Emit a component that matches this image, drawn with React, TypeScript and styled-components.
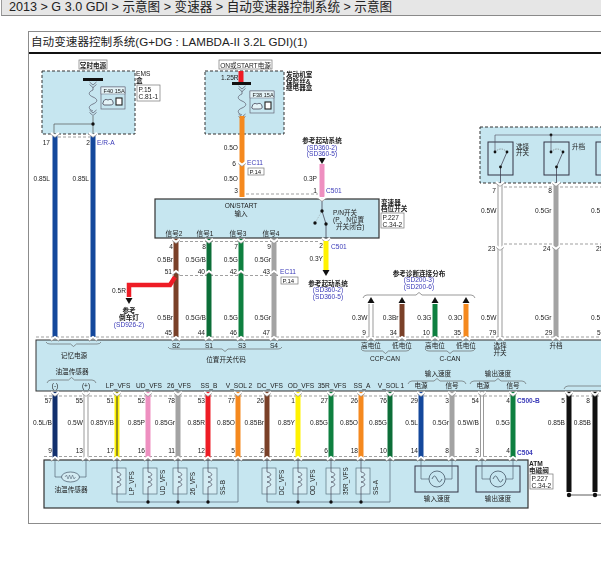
import React from "react";
import styled, { createGlobalStyle } from "styled-components";

const GlobalStyle = createGlobalStyle`
  html, body {
    margin: 0;
    background: #fff;
    font-family: "Liberation Sans", "Noto Sans CJK SC", sans-serif;
  }
`;

const Page = styled.div`
  width: 601px;
  height: 571px;
  overflow: hidden;
`;

const Crumb = styled.div`
  height: 15px;
  margin-left: 1px;
  padding-left: 7px;
  background: #e6e6e6;
  border-left: 1px solid #9a9a9a;
  border-bottom: 1px solid #8a8a8a;
  color: #222;
  font-size: 12.6px;
  line-height: 15px;
  white-space: nowrap;
`;

const Panel = styled.div`
  width: 640px;
  height: 491px;
  margin: 15px 0 0 28px;
  border: 1px solid #8c8c8c;
  border-right: 0;
`;

const PanelTitle = styled.div`
  height: 20px;
  padding-left: 2px;
  border-bottom: 2px solid #111;
  color: #222;
  font-size: 11.6px;
  line-height: 20px;
  white-space: nowrap;
`;

const Diagram = styled.svg`
  display: block;
  width: 572px;
  height: 469px;
  filter: blur(0.3px);
`;

const Label = styled.text<{ $blue?: boolean; $size?: number; $weight?: number }>`
  font-family: "Liberation Sans", "Noto Sans CJK SC", sans-serif;
  font-size: ${(p) => p.$size ?? 6.6}px;
  font-weight: ${(p) => p.$weight ?? 400};
  fill: ${(p) => (p.$blue ? "#3a3ab8" : "#222")};
`;

const SKY = "#c6e6f0";
const DK = "#333";
const BLUE = "#14489c";
const NAVY = "#12306e";
const GREEN = "#0e8040";
const DGREEN = "#0c6e38";
const BROWN = "#7a4028";
const GRAY = "#a3a3a3";
const ORANGE = "#f5891e";
const PINK = "#ee8fc0";
const YELLOW = "#fff200";
const RED = "#ee1c25";

type Txt = [number, number, string];

function Wire({ x, y1, y2, color, w = 5 }: { x: number; y1: number; y2: number; color: string; w?: number }) {
  if (color === "white") {
    return (
      <g>
        <line x1={x} x2={x} y1={y1} y2={y2} stroke="#9a9a9a" strokeWidth={w} />
        <line x1={x} x2={x} y1={y1} y2={y2} stroke="#fff" strokeWidth={w - 2} />
      </g>
    );
  }
  if (color === "stripe") {
    return (
      <g>
        <line x1={x} x2={x} y1={y1} y2={y2} stroke={YELLOW} strokeWidth={w} />
        <line x1={x} x2={x} y1={y1} y2={y2} stroke="#333" strokeWidth={1} />
      </g>
    );
  }
  return <line x1={x} x2={x} y1={y1} y2={y2} stroke={color} strokeWidth={w} />;
}

// little connector chevron; up=true points up
function Chev({ x, y, up = false }: { x: number; y: number; up?: boolean }) {
  const d = up ? -3 : 3;
  return (
    <g fill="none" strokeLinejoin="miter">
      <path d={`M${x - 4} ${y} L${x} ${y + d} L${x + 4} ${y}`} stroke="#fff" strokeWidth={2.2} />
      <path d={`M${x - 4} ${y + 1.4} L${x} ${y + d + 1.4} L${x + 4} ${y + 1.4}`} stroke="#777" strokeWidth={0.6} />
    </g>
  );
}

function DarkChev({ x, y }: { x: number; y: number }) {
  return (
    <path
      d={`M${x - 3.5} ${y} L${x} ${y + 3} L${x + 3.5} ${y} M${x - 3.5} ${y + 2.5} L${x} ${y + 5.5} L${x + 3.5} ${y + 2.5}`}
      fill="none"
      stroke="#556"
      strokeWidth={0.7}
    />
  );
}

function Dash({ x1, x2, y }: { x1: number; x2: number; y: number }) {
  return <line x1={x1} x2={x2} y1={y} y2={y} stroke="#777" strokeWidth={0.7} strokeDasharray="3 2" />;
}

function Arrow({ x, y }: { x: number; y: number }) {
  return <path d={`M${x - 3.5} ${y} H${x + 3.5} L${x} ${y + 6} Z`} fill="#111" />;
}

function UpArrow({ x, y }: { x: number; y: number }) {
  return <path d={`M${x - 3.5} ${y} H${x + 3.5} L${x} ${y - 6} Z`} fill="#111" />;
}

function Node({ x, y, r = 1.7 }: { x: number; y: number; r?: number }) {
  return <circle cx={x} cy={y} r={r} fill="#111" />;
}

function RefBox({ x, y, w, h, lines }: { x: number; y: number; w: number; h: number; lines: string[] }) {
  return (
    <g>
      <rect x={x} y={y} width={w} height={h} fill="#fff" stroke="#777" strokeWidth={0.7} />
      {lines.map((t, i) => (
        <Label key={t} x={x + 1.5} y={y + 6.5 + i * 7.2}>
          {t}
        </Label>
      ))}
    </g>
  );
}

function Fuse({ x, y, name }: { x: number; y: number; name: string }) {
  return (
    <g>
      <DarkChev x={x} y={y} />
      <path
        d={`M${x} ${y + 5} v3 c-5 2 -5 5 0 7 c5 2 5 5 0 7 c-5 2 -5 5 0 7`}
        fill="none"
        stroke="#556"
        strokeWidth={0.7}
      />
      <DarkChev x={x} y={y + 28} />
      <rect x={x + 8} y={y + 5} width={24} height={22} fill={SKY} stroke="#667" strokeWidth={0.7} />
      <rect x={x + 8} y={y + 5} width={24} height={7} fill="#e4f3f7" stroke="#667" strokeWidth={0.5} />
      <Label x={x + 10.5} y={y + 10.8} $size={5.6}>
        {name}
      </Label>
      <path
        d={`M${x + 10} ${y + 21} q1 -5 5 -3 q4 -2 5 2 q1 3 -3 3 h-6 q-2 -1 -1 -2 z`}
        fill="#e4f3f7"
        stroke="#445"
        strokeWidth={0.8}
      />
      <rect x={x + 23} y={y + 16} width={6} height={7} fill="#fff" stroke="#222" strokeWidth={1.1} />
    </g>
  );
}

function Coil({ x, name }: { x: number; name: string }) {
  const cx = x + 5;
  return (
    <g>
      <rect x={x} y={468} width={14} height={26} fill="#d4ecf3" stroke="#5a7480" strokeWidth={0.7} />
      <path
        d={`M${cx} 460 V472 c5 1 5 4 0 5 c5 1 5 4 0 5 c5 1 5 4 0 5 V502`}
        fill="none"
        stroke="#445"
        strokeWidth={0.7}
      />
      <Label transform={`translate(${x + 21.5} 495) rotate(-90)`} $size={6.4}>
        {name}
      </Label>
    </g>
  );
}

function SpeedBox({ x, w, a, b, name, cx }: { x: number; w: number; a: number; b: number; name: string; cx: number }) {
  return (
    <g>
      <rect x={x} y={466} width={w} height={26} fill="none" stroke="#334" strokeWidth={1} />
      <path d={`M${a} 460 V479 H${cx - 8} M${b} 460 V479 H${cx + 8}`} fill="none" stroke="#567" strokeWidth={0.7} />
      <circle cx={cx} cy={479} r={8} fill={SKY} stroke="#456" strokeWidth={0.8} />
      <path d={`M${cx - 5} 479 q2.5 -6 5 0 t5 0`} fill="none" stroke="#456" strokeWidth={0.8} />
      <Label x={cx} y={501} textAnchor="middle">
        {name}
      </Label>
    </g>
  );
}

function Switch({ x, top }: { x: number; top?: boolean }) {
  return (
    <g>
      <rect x={x} y={142} width={25} height={33} fill="none" stroke="#334" strokeWidth={1} />
      <path d={`M${x + 7} 152 Q${x + 13} 146 ${x + 19} 152`} fill="none" stroke="#666" strokeWidth={0.6} strokeDasharray="1.5 1" />
      <path d={`M${x + 19} 152 L${x + 12.5} 167 V183`} fill="none" stroke="#445" strokeWidth={0.8} />
      {top && <path d={`M${x + 7} 135 V152`} fill="none" stroke="#556" strokeWidth={0.7} />}
      <Node x={x + 7} y={152} r={1.4} />
      <Node x={x + 19} y={152} r={1.4} />
      <Node x={x + 12.5} y={167} r={1.4} />
    </g>
  );
}

const lowerWires: [number, string, string, string, string][] = [
  [55, NAVY, "57", "0.5L/B", "9"],
  [86, "white", "55", "0.5W", "13"],
  [117, "stripe", "51", "0.85Y/B", "17"],
  [148, PINK, "52", "0.85P", "16"],
  [178, GRAY, "78", "0.85Gr", "11"],
  [208, RED, "53", "0.85R", "12"],
  [238, ORANGE, "77", "0.85O", "5"],
  [267, BROWN, "26", "0.85Br", "2"],
  [298, YELLOW, "1", "0.85Y", "7"],
  [331, GREEN, "27", "0.85G", "6"],
  [361, ORANGE, "26", "0.85O", "18"],
  [390, DGREEN, "76", "0.85G", "10"],
  [421, BLUE, "29", "0.5L", "14"],
  [452, GRAY, "3", "0.5Gr", "8"],
  [482, "white", "54", "0.5W/B", "3"],
  [513, GREEN, "4", "0.5G", "4"],
];

const midWires: [number, string, string, string, string, string][] = [
  [176, BROWN, "4", "0.5Br", "51", "45"],
  [209, DGREEN, "8", "0.5G/B", "40", "44"],
  [241, GREEN, "7", "0.5G", "42", "46"],
  [274, GRAY, "9", "0.5Gr", "43", "47"],
];

const canWires: [number, string, string, string][] = [
  [371, "white", "0.3W", "9"],
  [402, BROWN, "0.3Br", "34"],
  [435, GREEN, "0.3G", "10"],
  [466, ORANGE, "0.3O", "35"],
];

const moduleTexts: Txt[] = [
  [74, 358, "记忆电源"],
  [72, 374, "油温传感器"],
  [55, 388, "(-)"],
  [86, 388, "(+)"],
  [118, 388, "LP_VFS"],
  [149, 388, "UD_VFS"],
  [179, 388, "26_VFS"],
  [209, 388, "SS_B"],
  [239, 388, "V_SOL 2"],
  [270, 388, "DC_VFS"],
  [301, 388, "OD_VFS"],
  [332, 388, "35R_VFS"],
  [362, 388, "SS_A"],
  [391, 388, "V_SOL 1"],
  [421, 388, "电源"],
  [452, 388, "信号"],
  [483, 388, "电源"],
  [513, 388, "信号"],
  [176, 348, "S2"],
  [209, 348, "S1"],
  [242, 348, "S3"],
  [274, 348, "S4"],
  [226, 362, "位置开关代码"],
  [371, 348, "高电位"],
  [402, 348, "低电位"],
  [435, 348, "高电位"],
  [466, 348, "低电位"],
  [385, 361, "CCP-CAN"],
  [450, 361, "C-CAN"],
  [500, 347.5, "选择"],
  [500, 355, "开关"],
  [556, 347.5, "升档"],
  [438, 376, "输入速度"],
  [498, 376, "输出速度"],
];

const coils: [number, string][] = [
  [112, "LP_VFS"],
  [143, "UD_VFS"],
  [173, "26_VFS"],
  [203, "SS-B"],
  [262, "DC_VFS"],
  [293, "OD_VFS"],
  [326, "35R_VFS"],
  [356, "SS-A"],
];

function Brace({ x1, x2, y }: { x1: number; x2: number; y: number }) {
  const m = (x1 + x2) / 2;
  return (
    <path
      d={`M${x1} ${y - 2} q1 2 4 2 H${m - 3} l3 2.5 l3 -2.5 H${x2 - 4} q3 0 4 -2`}
      fill="none"
      stroke="#555"
      strokeWidth={0.6}
    />
  );
}

function BraceUp({ x1, x2, y }: { x1: number; x2: number; y: number }) {
  const m = (x1 + x2) / 2;
  return (
    <path
      d={`M${x1} ${y + 3} q1 -3 4 -3 H${m - 3} l3 -2.5 l3 2.5 H${x2 - 4} q3 0 4 3`}
      fill="none"
      stroke="#555"
      strokeWidth={0.6}
    />
  );
}

function WiringDiagram() {
  return (
    <Diagram viewBox="29 54 572 469">
      {/* fuse boxes */}
      <rect x={42} y={71} width={93} height={63} fill={SKY} stroke={DK} strokeWidth={1} strokeDasharray="3 2" />
      <rect x={205} y={71} width={79} height={63} fill={SKY} stroke={DK} strokeWidth={1} strokeDasharray="3 2" />
      <rect x={480} y={127} width={140} height={56} fill={SKY} stroke={DK} strokeWidth={1} strokeDasharray="3 2" />

      <RefBox x={79} y={60} w={28} h={9} lines={[]} />
      <Label x={93} y={67.5} textAnchor="middle" $weight={700}>
        常时电源
      </Label>
      <RefBox x={219} y={60} w={53} h={9} lines={[]} />
      <Label x={245.5} y={67.5} textAnchor="middle">
        ON或START电源
      </Label>

      <rect x={83} y={78} width={20} height={3} fill="#111" />
      <Fuse x={93} y={82} name="F40 15A" />
      <path d="M93 116 V124 H54 V134 M93 124 V134" fill="none" stroke="#555" strokeWidth={0.7} />
      <Node x={93} y={124} />
      <Label x={136} y={76}>
        EMS
      </Label>
      <Label x={136} y={83} $weight={700}>
        盒
      </Label>
      <RefBox x={137} y={85} w={23} h={16} lines={["P.15", "C.81-1"]} />

      <Wire x={241} y1={71} y2={83} color={RED} />
      <rect x={232} y={82} width={19} height={3} fill="#111" />
      <Label x={221} y={79.5}>
        1.25R
      </Label>
      <Fuse x={242} y={86} name="F38 15A" />
      <Label x={286} y={77} $weight={700}>
        发动机室
      </Label>
      <Label x={286} y={83.5} $weight={700}>
        保险丝&amp;
      </Label>
      <Label x={286} y={90} $weight={700}>
        继电器盒
      </Label>

      {/* power wires */}
      <Wire x={55} y1={136} y2={337} color={BLUE} />
      <Wire x={93} y1={136} y2={337} color={BLUE} />
      <Chev x={55} y={133} />
      <Chev x={93} y={133} />
      <Dash x1={58} x2={90} y={137} />
      <Label x={50} y={144.5} textAnchor="end">
        17
      </Label>
      <Label x={90} y={144.5} textAnchor="end">
        2
      </Label>
      <Label x={97} y={144.5} $blue>
        E/R-A
      </Label>
      <Label x={50} y={181} textAnchor="end">
        0.85L
      </Label>
      <Label x={89} y={181} textAnchor="end">
        0.85L
      </Label>

      <Wire x={242} y1={116} y2={197} color={ORANGE} />
      <Chev x={242} y={162} />
      <Label x={238} y={150} textAnchor="end">
        0.5O
      </Label>
      <Label x={236} y={166} textAnchor="end">
        6
      </Label>
      <Label x={247} y={165} $blue>
        EC11
      </Label>
      <RefBox x={248} y={168} w={16} h={7} lines={[]} />
      <Label x={249.5} y={174} $size={6}>
        P.14
      </Label>
      <Label x={238} y={181} textAnchor="end">
        0.5O
      </Label>
      <Label x={238} y={193} textAnchor="end">
        3
      </Label>
      <Dash x1={246} x2={318} y={194} />

      <Label x={322} y={143} textAnchor="middle" $weight={700}>
        参考起动系统
      </Label>
      <Label x={322} y={149.5} textAnchor="middle" $blue>
        (SD360-2)
      </Label>
      <Label x={322} y={155.5} textAnchor="middle" $blue>
        (SD360-5)
      </Label>
      <Arrow x={322} y={158} />
      <Wire x={322} y1={164} y2={197} color={PINK} />
      <Label x={317} y={181} textAnchor="end">
        0.3P
      </Label>
      <Label x={317} y={193} textAnchor="end">
        1
      </Label>
      <Label x={326} y={193} $blue>
        C501
      </Label>

      {/* ON/START module */}
      <rect x={155} y={199} width={224} height={39} fill={SKY} stroke={DK} strokeWidth={1.2} />
      <Label x={241} y={208} textAnchor="middle">
        ON/START
      </Label>
      <Label x={241} y={215.5} textAnchor="middle">
        输入
      </Label>
      {["信号2", "信号1", "信号3", "信号4"].map((t, i) => (
        <Label key={t} x={[174, 205, 238, 271][i]} y={235.5} textAnchor="middle">
          {t}
        </Label>
      ))}
      <path d="M322 199 V211 M326 238 V224 L322 211" fill="none" stroke="#445" strokeWidth={0.8} />
      <path d="M315 223 L322 211" fill="none" stroke="#888" strokeWidth={0.5} strokeDasharray="1 1" />
      <Node x={322} y={211} />
      <Node x={326} y={224} />
      <Node x={315} y={223} />
      <Label x={333} y={214.5}>
        P/N开关
      </Label>
      <Label x={333} y={221.5}>
        (P、N位置
      </Label>
      <Label x={336} y={228.5}>
        开关闭合)
      </Label>
      <Label x={381} y={204.5} $weight={700}>
        变速器
      </Label>
      <Label x={381} y={210.5} $weight={700}>
        档位开关
      </Label>
      <RefBox x={381} y={213} w={23} h={15} lines={["P.227", "C.34-2"]} />
      <Chev x={322} y={197} />
      <Chev x={326} y={238} />

      {/* signal wires */}
      <Dash x1={180} x2={318} y={241.5} />
      <Dash x1={180} x2={278} y={275.5} />
      {midWires.map(([x, c, top, spec, mid, low]) => (
        <g key={x}>
          <Wire x={x} y1={239} y2={337} color={c} />
          <Chev x={x} y={239} />
          <Chev x={x} y={274} up />
          <Label x={x - 3} y={248.5} textAnchor="end">
            {top}
          </Label>
          <Label x={x - 3} y={261.5} textAnchor="end">
            {spec}
          </Label>
          <Label x={x - 4} y={274} textAnchor="end">
            {mid}
          </Label>
          <Label x={x - 3} y={320} textAnchor="end">
            {spec}
          </Label>
          <Label x={x - 4} y={334.5} textAnchor="end">
            {low}
          </Label>
        </g>
      ))}
      <Label x={280} y={274} $blue>
        EC11
      </Label>
      <RefBox x={281} y={277} w={17} h={7} lines={[]} />
      <Label x={282.5} y={283} $size={6}>
        P.14
      </Label>
      <path d="M175 277 L170 285 H129 V297" fill="none" stroke={RED} strokeWidth={4.5} />
      <Label x={126} y={292.5} textAnchor="end">
        0.5R
      </Label>
      <Arrow x={129} y={298} />
      <Label x={129} y={313} textAnchor="middle" $weight={700}>
        参考
      </Label>
      <Label x={129} y={320} textAnchor="middle" $weight={700}>
        倒车灯
      </Label>
      <Label x={129} y={326.5} textAnchor="middle" $blue>
        (SD926-2)
      </Label>

      <Wire x={326} y1={241} y2={270} color={YELLOW} />
      <Arrow x={326} y={270} />
      <Label x={323} y={248} textAnchor="end">
        2
      </Label>
      <Label x={331} y={248.5} $blue>
        C501
      </Label>
      <Label x={323} y={260.5} textAnchor="end">
        0.3Y
      </Label>
      <Label x={328} y={285.5} textAnchor="middle" $weight={700}>
        参考起动系统
      </Label>
      <Label x={328} y={291.5} textAnchor="middle" $blue>
        (SD360-2)
      </Label>
      <Label x={328} y={298.5} textAnchor="middle" $blue>
        (SD360-5)
      </Label>

      {/* CAN refs */}
      <Label x={419} y={275.5} textAnchor="middle" $weight={700}>
        参考诊断连接分布
      </Label>
      <Label x={419} y={281.5} textAnchor="middle" $blue>
        (SD200-3)
      </Label>
      <Label x={419} y={288.5} textAnchor="middle" $blue>
        (SD200-6)
      </Label>
      <BraceUp x1={363} x2={475} y={295} />
      {canWires.map(([x, c, spec, n]) => (
        <g key={x}>
          <UpArrow x={x} y={303} />
          <Wire x={x} y1={304} y2={337} color={c} />
          <Label x={x - 3.5} y={319.5} textAnchor="end">
            {spec}
          </Label>
          <Label x={x - 5} y={334.5} textAnchor="end">
            {n}
          </Label>
        </g>
      ))}

      {/* right switches */}
      <path d="M495 135 H601" fill="none" stroke="#667" strokeWidth={0.7} />
      <Node x={551} y={135} r={1.4} />
      <Switch x={488} top />
      <Switch x={544} top />
      <Switch x={596} />
      <Label x={516} y={148.5}>
        选择
      </Label>
      <Label x={516} y={155}>
        开关
      </Label>
      <Label x={572} y={148.5}>
        升档
      </Label>
      <Wire x={500} y1={184} y2={337} color="white" />
      <Wire x={556} y1={184} y2={337} color={GRAY} />
      <Chev x={500} y={182} />
      <Chev x={556} y={182} />
      <Chev x={500} y={246} />
      <Chev x={556} y={246} />
      <Dash x1={504} x2={552} y={187} />
      <Dash x1={560} x2={601} y={187} />
      <Dash x1={504} x2={552} y={244} />
      <Dash x1={560} x2={601} y={244} />
      <Label x={496} y={192.5} textAnchor="end">
        7
      </Label>
      <Label x={552} y={192.5} textAnchor="end">
        8
      </Label>
      <Label x={481} y={212.5}>
        0.5W
      </Label>
      <Label x={535} y={212.5}>
        0.5Gr
      </Label>
      <Label x={591} y={212.5}>
        0.5
      </Label>
      <Label x={488} y={250.5}>
        23
      </Label>
      <Label x={543} y={250.5}>
        24
      </Label>
      <Label x={596} y={250.5}>
        25
      </Label>
      <Label x={481} y={319.5}>
        0.5W
      </Label>
      <Label x={535} y={319.5}>
        0.5Gr
      </Label>
      <Label x={591} y={319.5}>
        0.5
      </Label>
      <Label x={489} y={334.5}>
        79
      </Label>
      <Label x={545} y={334.5}>
        29
      </Label>
      <Label x={597} y={334.5}>
        5
      </Label>

      {/* main module */}
      <Dash x1={36} x2={601} y={337} />
      <rect x={36} y={340} width={590} height={51} fill={SKY} stroke={DK} strokeWidth={1} />
      {[55, 93, 176, 209, 241, 274, 371, 402, 435, 466, 500, 556].map((x) => (
        <Chev key={x} x={x} y={340} up />
      ))}
      <Brace x1={46} x2={101} y={344} />
      <Brace x1={168} x2={282} y={349} />
      <BraceUp x1={47} x2={96} y={380} />
      <Brace x1={361} x2={410} y={351} />
      <Brace x1={425} x2={475} y={351} />
      <BraceUp x1={408} x2={466} y={381} />
      <BraceUp x1={470} x2={526} y={381} />
      <path d="M564 389 q1 -3 4 -3 H601" fill="none" stroke="#555" strokeWidth={0.6} />
      {moduleTexts.map(([x, y, t]) => (
        <Label key={`${x}-${y}-${t}`} x={x} y={y} textAnchor="middle">
          {t}
        </Label>
      ))}

      {/* lower module */}
      <rect x={44} y={460} width={484} height={48} fill={SKY} stroke={DK} strokeWidth={1.2} />
      <Dash x1={44} x2={516} y={396} />
      <Dash x1={566} x2={601} y={396} />
      <Dash x1={44} x2={516} y={456.5} />
      {lowerWires.map(([x, c, top, spec, low]) => (
        <g key={x}>
          <Wire x={x} y1={392} y2={459} color={c} w={x === 482 ? 4 : 5} />
          <Chev x={x} y={392} />
          <Chev x={x} y={460} up />
          <Label x={x - 3} y={402.5} textAnchor="end">
            {top}
          </Label>
          <Label x={x - 3} y={424.5} textAnchor="end">
            {spec}
          </Label>
          <Label x={x - 3} y={453} textAnchor="end">
            {low}
          </Label>
        </g>
      ))}
      <Label x={517} y={402.5} $blue $weight={700}>
        C500-B
      </Label>
      <Label x={517} y={454.5} $blue $weight={700}>
        C504
      </Label>
      <Label x={565} y={402.5} textAnchor="end">
        5
      </Label>
      <Label x={590} y={402.5} textAnchor="end">
        8
      </Label>
      <Label x={565} y={424.5} textAnchor="end">
        0.85B
      </Label>
      <Label x={591} y={424.5} textAnchor="end">
        0.85B
      </Label>
      <Wire x={569} y1={392} y2={492} color="#111" />
      <Wire x={595} y1={392} y2={492} color="#111" />
      <Chev x={569} y={392} />
      <Chev x={595} y={392} />
      <path d="M569 495 H601" stroke="#333" strokeWidth={0.8} />
      <Node x={569} y={495} r={2.2} />
      <Node x={595} y={495} r={2.2} />

      {/* oil sensor */}
      <path d="M55 460 V477 H62 M86 460 V477 H79" fill="none" stroke="#567" strokeWidth={0.7} />
      <ellipse cx={70.5} cy={477} rx={9} ry={5} fill="#d4ecf3" stroke="#456" strokeWidth={0.7} />
      <path d="M65 477 l1.5 -2 l1.5 4 l1.5 -4 l1.5 4 l1.5 -4 l1.5 4 l1.5 -2" fill="none" stroke="#456" strokeWidth={0.5} />
      <Label x={71} y={491.5} textAnchor="middle">
        油温传感器
      </Label>

      {/* solenoids */}
      {coils.map(([x, name]) => (
        <Coil key={x} x={x} name={name} />
      ))}
      <path d="M117 502 H238 V460 M267 502 H390 V460" fill="none" stroke="#567" strokeWidth={0.7} />
      {[148, 178, 208, 298, 331, 361].map((x) => (
        <Node key={x} x={x} y={502} />
      ))}

      {/* speed sensors */}
      <SpeedBox x={415} w={43} a={421} b={452} cx={437} name="输入速度" />
      <SpeedBox x={476} w={44} a={482} b={513} cx={498} name="输出速度" />
      <Label x={529} y={465.5} $weight={700}>
        ATM
      </Label>
      <Label x={529} y={472.5} $weight={700}>
        电磁阀
      </Label>
      <RefBox x={530} y={474} w={23} h={15} lines={["P.227", "C.34-2"]} />
    </Diagram>
  );
}

export default function App() {
  return (
    <Page>
      <GlobalStyle />
      <Crumb>2013 &gt; G 3.0 GDI &gt; 示意图 &gt; 变速器 &gt; 自动变速器控制系统 &gt; 示意图</Crumb>
      <Panel>
        <PanelTitle>自动变速器控制系统(G+DG : LAMBDA-II 3.2L GDI)(1)</PanelTitle>
        <WiringDiagram />
      </Panel>
    </Page>
  );
}
